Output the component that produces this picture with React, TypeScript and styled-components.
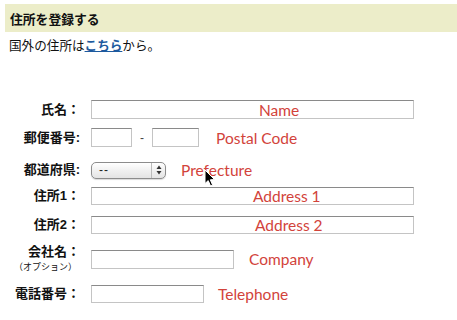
import styled, { createGlobalStyle } from 'styled-components';

const GlobalStyle = createGlobalStyle`
  html, body {
    margin: 0;
    padding: 0;
    background: #fff;
  }
  body {
    font-family: "Liberation Sans", "Noto Sans CJK JP", sans-serif;
    color: #111;
  }
`;

const Page = styled.div`
  width: 457px;
  height: 320px;
  overflow: hidden;
  padding-top: 4px;
  box-sizing: border-box;
`;

const TitleBar = styled.h2`
  margin: 0 0 0 5px;
  height: 28px;
  padding-left: 5px;
  display: flex;
  align-items: center;
  background: #ecedc9;
  font-size: 12.8px;
  font-weight: bold;
`;

const Intro = styled.p`
  margin: 5px 0 0 9px;
  font-size: 12.6px;
  line-height: 18px;
`;

const Link = styled.a`
  color: #1d5a9e;
  text-decoration: underline;
  font-weight: bold;
  cursor: pointer;
`;

const Form = styled.div`
  margin-top: 45px;
`;

const Row = styled.div<{ $top: number }>`
  display: flex;
  align-items: center;
  margin-top: ${p => p.$top}px;
`;

const Label = styled.div`
  width: 80px;
  flex: none;
  text-align: right;
  font-size: 13px;
  font-weight: bold;
  line-height: 16px;
  margin-right: 11px;
`;

const Optional = styled.div`
  font-size: 9px;
  font-weight: normal;
  line-height: 14px;
  margin-right: 3px;
`;

const Field = styled.div`
  position: relative;
  display: flex;
  align-items: center;
`;

const TextBox = styled.div<{ $w: number; $h?: number }>`
  width: ${p => p.$w}px;
  height: ${p => p.$h ?? 19}px;
  box-sizing: border-box;
  border: 1px solid #c4c4c4;
  border-top-color: #8a8a8a;
  background: #fff;
  flex: none;
`;

const Dash = styled.span`
  width: 20px;
  text-align: center;
  font-size: 12px;
  color: #444;
`;

const Select = styled.div`
  width: 75px;
  height: 17px;
  box-sizing: border-box;
  border: 1px solid #8c8c8c;
  border-radius: 5px;
  background: linear-gradient(#ffffff, #f2f2f2 45%, #e4e4e4);
  box-shadow: 0 1px 1px rgba(0, 0, 0, 0.15);
  display: flex;
  align-items: center;
  font-size: 12px;
  color: #222;
`;

const SelectValue = styled.span`
  flex: 1;
  padding-left: 7px;
  letter-spacing: 1px;
`;

const SelectArrows = styled.span`
  width: 13px;
  height: 100%;
  border-left: 1px solid #bbb;
  display: flex;
  align-items: center;
  justify-content: center;
`;

const Note = styled.span<{ $gap: number }>`
  position: relative;
  margin-left: ${p => p.$gap}px;
  font-family: Lato, "Open Sans", sans-serif;
  font-size: 15.5px;
  color: #d2433b;
  white-space: nowrap;
`;

const OverNote = styled.span<{ $left: number }>`
  position: absolute;
  left: ${p => p.$left}px;
  top: 50%;
  transform: translateY(-50%);
  font-family: Lato, "Open Sans", sans-serif;
  font-size: 15.5px;
  color: #d2433b;
  white-space: nowrap;
  pointer-events: none;
`;

const Pointer = styled.svg`
  position: absolute;
  left: 23px;
  top: 8px;
`;

export default function App() {
  return (
    <Page>
      <GlobalStyle />
      <TitleBar>住所を登録する</TitleBar>
      <Intro>
        国外の住所は<Link>こちら</Link>から。
      </Intro>
      <Form>
        <Row $top={0}>
          <Label>氏名：</Label>
          <Field>
            <TextBox $w={323} />
            <OverNote $left={168}>Name</OverNote>
          </Field>
        </Row>
        <Row $top={9}>
          <Label>郵便番号:</Label>
          <Field>
            <TextBox $w={41} />
            <Dash>-</Dash>
            <TextBox $w={47} />
            <Note $gap={17}>Postal Code</Note>
          </Field>
        </Row>
        <Row $top={14}>
          <Label>都道府県:</Label>
          <Field>
            <Select>
              <SelectValue>--</SelectValue>
              <SelectArrows>
                <svg width="6" height="10" viewBox="0 0 6 10">
                  <path d="M3 0.5 L5.5 4 H0.5 Z" fill="#333" />
                  <path d="M3 9.5 L5.5 6 H0.5 Z" fill="#333" />
                </svg>
              </SelectArrows>
            </Select>
            <Note $gap={15}>
              Prefecture
              <Pointer width="12" height="18" viewBox="0 0 12 18">
                <path
                  d="M1 1 L1 14.5 L4.2 11.6 L6.6 17 L8.6 16.1 L6.3 10.8 L10.6 10.6 Z"
                  fill="#000"
                  stroke="#fff"
                  strokeWidth="1"
                />
              </Pointer>
            </Note>
          </Field>
        </Row>
        <Row $top={8}>
          <Label>住所1：</Label>
          <Field>
            <TextBox $w={323} $h={18} />
            <OverNote $left={162}>Address 1</OverNote>
          </Field>
        </Row>
        <Row $top={11}>
          <Label>住所2：</Label>
          <Field>
            <TextBox $w={323} $h={18} />
            <OverNote $left={164}>Address 2</OverNote>
          </Field>
        </Row>
        <Row $top={10}>
          <Label>
            会社名：
            <Optional>（オプション）</Optional>
          </Label>
          <Field>
            <TextBox $w={143} />
            <Note $gap={15}>Company</Note>
          </Field>
        </Row>
        <Row $top={11}>
          <Label>電話番号：</Label>
          <Field>
            <TextBox $w={113} $h={18} />
            <Note $gap={14}>Telephone</Note>
          </Field>
        </Row>
      </Form>
    </Page>
  );
}
